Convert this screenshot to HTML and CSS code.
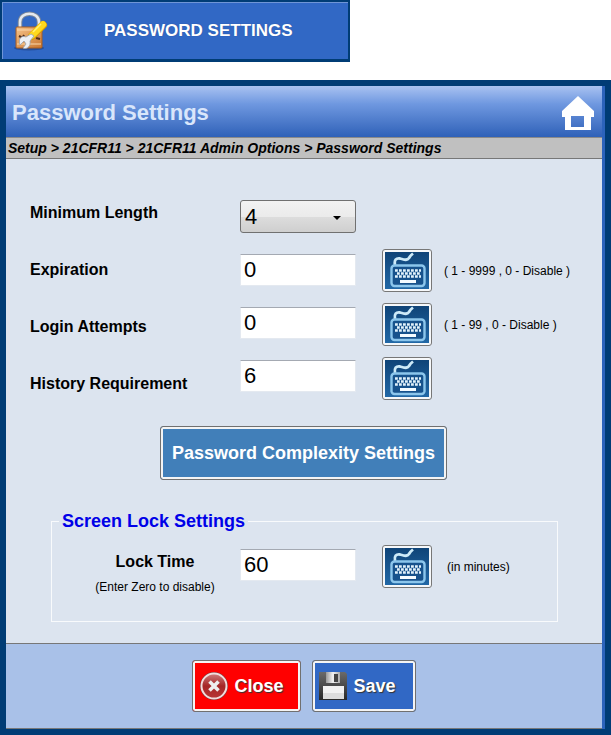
FILE: index.html
```html
<!DOCTYPE html>
<html lang="en">
<head>
<meta charset="utf-8">
<title>Password Settings</title>
<link rel="stylesheet" href="styles.css">
</head>
<body>
<svg class="defs" aria-hidden="true">
  <defs>
    <linearGradient id="key-bg" x1="0" y1="0" x2="0" y2="1">
      <stop offset="0" stop-color="#0f4478"/><stop offset="1" stop-color="#2268a6"/>
    </linearGradient>
    <symbol id="keyboard" viewBox="0 0 44 37">
      <rect width="44" height="37" fill="url(#key-bg)"/>
      <path d="M10 13C9 8 11 6 15 6.500C19 7.500 22 9 24 6C25 4 26 3 28 1.500" fill="none" stroke="#cdeaf8" stroke-width="2.800"/>
      <rect x="6.500" y="13.500" width="33" height="20.500" rx="3" fill="#17528c" stroke="#8cc6ec" stroke-width="2.400"/>
      <path d="M10 18.500H36M10 24.500H36" stroke="#e2f2fb" stroke-width="2.600" stroke-dasharray="2.800 1.200"/>
      <path d="M12 21.500H35" stroke="#e2f2fb" stroke-width="2.600" stroke-dasharray="2.800 1.200"/>
      <path d="M15 29.500H31" stroke="#f4fbff" stroke-width="3"/>
    </symbol>
  </defs>
</svg>

<button class="launcher" type="button">
  <svg class="launcher-icon" viewBox="0 0 36 40" aria-hidden="true">
    <defs>
      <linearGradient id="lock" x1="0" y1="0" x2="1" y2="1">
        <stop offset="0" stop-color="#f6c38a"/><stop offset="1" stop-color="#c9762f"/>
      </linearGradient>
    </defs>
    <ellipse cx="17" cy="37" rx="15" ry="2.500" fill="#1c3f80" opacity=".6"/>
    <path d="M8 17V11C8 0 27 0 27 11V17" fill="none" stroke="#7b8797" stroke-width="4.500"/>
    <path d="M8 17V11C8 0 27 0 27 11V17" fill="none" stroke="#e4e8ee" stroke-width="2.600"/>
    <rect x="4" y="16" width="26" height="21" rx="1" fill="url(#lock)" stroke="#a85d20"/>
    <path d="M5 19H29M5 33H29" stroke="#fbd9ad"/>
    <path d="M7 25l4 2M12 24l-2 4M24 27l4 1" stroke="#55301a" stroke-width="2"/>
    <path d="M20 25L31 14" stroke="#d99a00" stroke-width="8" stroke-linecap="round"/>
    <path d="M20 24.500L31 13.500" stroke="#ffd91f" stroke-width="6.500" stroke-linecap="round"/>
    <path d="M21 21L29 13" stroke="#fff27a" stroke-width="1.500"/>
    <path d="M22 25L18 30C19 35 15 39 11 37L14 33L12 30L8 34C6 28 9 24 14 26L19 23Z" fill="#edf0f4" stroke="#98a2ae" stroke-width=".8"/>
  </svg>
  <span class="launcher-text">PASSWORD SETTINGS</span>
</button>

<main class="dialog">
  <header class="titlebar">
    <h1>Password Settings</h1>
    <a class="home" href="#" aria-label="Home">
      <svg viewBox="0 0 32 34" aria-hidden="true"><path fill="#fff" fill-rule="evenodd" d="M16 0L32 15V21H29V34H3V21H0V15ZM9 20V31H22V20Z"/></svg>
    </a>
  </header>
  <nav class="crumbs">Setup &gt; 21CFR11 &gt; 21CFR11 Admin Options &gt; Password Settings</nav>

  <form class="form" id="settings">
    <div class="columns">
      <div class="labels">
        <label for="length">Minimum Length</label>
        <label for="expiration">Expiration</label>
        <label for="attempts">Login Attempts</label>
        <label for="history">History Requirement</label>
      </div>
      <div class="fields">
        <div class="picker">
          <select id="length"><option>4</option></select>
        </div>
        <input id="expiration" type="text" value="0">
        <input id="attempts" type="text" value="0">
        <input id="history" type="text" value="6">
      </div>
      <div class="keys">
        <div class="key-row">
          <button class="key" type="button" aria-label="Keyboard for Expiration"><svg><use href="#keyboard"/></svg></button>
          <span>( 1 - 9999 , 0 - Disable )</span>
        </div>
        <div class="key-row">
          <button class="key" type="button" aria-label="Keyboard for Login Attempts"><svg><use href="#keyboard"/></svg></button>
          <span>( 1 - 99 , 0 - Disable )</span>
        </div>
        <div class="key-row">
          <button class="key" type="button" aria-label="Keyboard for History Requirement"><svg><use href="#keyboard"/></svg></button>
        </div>
      </div>
    </div>

    <button class="btn complexity" type="button">Password Complexity Settings</button>

    <fieldset>
      <legend>Screen Lock Settings</legend>
      <div class="lock-row">
        <div class="lock-label">
          <label for="lock-time">Lock Time</label>
          <small>(Enter Zero to disable)</small>
        </div>
        <input id="lock-time" type="text" value="60">
        <div class="key-row">
          <button class="key" type="button" aria-label="Keyboard for Lock Time"><svg><use href="#keyboard"/></svg></button>
          <span>(in minutes)</span>
        </div>
      </div>
    </fieldset>
  </form>

  <footer class="actions">
    <button class="btn close" type="button">
      <svg viewBox="0 0 28 28" aria-hidden="true">
        <defs><linearGradient id="disc" x1="0" y1="0" x2="0" y2="1"><stop offset="0" stop-color="#d08080"/><stop offset=".5" stop-color="#a52626"/><stop offset="1" stop-color="#b93838"/></linearGradient></defs>
        <circle cx="14" cy="14" r="13" fill="url(#disc)" stroke="#7d3535" stroke-width="2"/>
        <circle cx="14" cy="14" r="12.500" fill="none" stroke="#f3dcdc" stroke-width="2"/>
        <path d="M9.500 9.500L18.500 18.500M18.500 9.500L9.500 18.500" stroke="#eee" stroke-width="3.600"/>
      </svg>
      Close
    </button>
    <button class="btn save" type="submit" form="settings">
      <svg viewBox="0 0 28 28" aria-hidden="true">
        <defs>
          <linearGradient id="disk" x1="0" y1="0" x2="0" y2="1"><stop offset="0" stop-color="#6a6a6a"/><stop offset="1" stop-color="#292929"/></linearGradient>
          <linearGradient id="steel" x1="0" y1="0" x2="1" y2="0"><stop offset="0" stop-color="#999"/><stop offset=".5" stop-color="#f3f3f3"/><stop offset="1" stop-color="#aaa"/></linearGradient>
        </defs>
        <path d="M0 0H26L28 2V28H0Z" fill="url(#disk)"/>
        <rect x="7" width="14" height="11" fill="url(#steel)"/>
        <rect x="15" y="2" width="4" height="8" fill="#444"/>
        <rect x="4" y="14" width="21" height="13" fill="#f2f2f2"/>
        <path d="M4 21H25V27H4Z" fill="#ddd"/>
      </svg>
      Save
    </button>
  </footer>
</main>
</body>
</html>
```
FILE: styles.css
```css
* { box-sizing: border-box; }

body {
  margin: 0;
  background: #fff;
  color: #000;
  font-family: "Liberation Sans", Arial, sans-serif;
  font-size: 16px;
}

button, input, select { font-family: inherit; margin: 0; }

.defs { position: absolute; width: 0; height: 0; }

.launcher {
  display: flex;
  align-items: center;
  width: 350px;
  height: 62px;
  padding: 0 10px;
  border: 2px solid #003c75;
  border-bottom-width: 3px;
  background: #3168c5;
  box-shadow: inset 1px 1px 0 #6f95d6;
  color: #fff;
  font-size: 17px;
  font-weight: bold;
}
.launcher-icon { width: 36px; height: 40px; }
.launcher-text { margin-left: 56px; text-shadow: 0 0 1px #23488c; }

.dialog {
  margin-top: 18px;
  border: 6px solid #003c75;
  padding-right: 3px;
  background: #2c63bb;
}

.titlebar {
  display: flex;
  align-items: center;
  justify-content: space-between;
  height: 51px;
  padding: 2px 8px 0 6px;
  background: linear-gradient(#a9c2f1, #6f98e0 35%, #2f61b8);
}
h1 { margin: 0; font-size: 22px; color: #d9e6fb; }
.home { width: 32px; height: 34px; }
.home svg { display: block; width: 100%; height: 100%; }

.crumbs {
  height: 22px;
  padding-left: 2px;
  border-top: 1px solid #8a8a8a;
  border-bottom: 1px solid #777;
  background: #c0c0c0;
  font-size: 14px;
  font-weight: bold;
  font-style: italic;
  line-height: 20px;
}

.form {
  padding: 41px 44px 21px 24px;
  background: #dce4ef;
}
.columns { display: flex; margin-right: -44px; }
.labels {
  display: flex;
  flex-direction: column;
  gap: 37px;
  width: 210px;
  padding-top: 3px;
  font-weight: bold;
  line-height: 20px;
}
.fields {
  display: flex;
  flex-direction: column;
  gap: 21px;
  width: 116px;
}

input, select {
  width: 116px;
  height: 32px;
  border: 1px solid #e4e9f0;
  border-top-color: #a4a9b2;
  padding: 0 3px;
  background: #fff;
  color: #000;
  font-size: 22px;
}

.picker { position: relative; height: 33px; }
.picker::after {
  content: "";
  position: absolute;
  right: 15px;
  top: 16px;
  border: 4px solid transparent;
  border-top-color: #000;
  border-bottom: 0;
  pointer-events: none;
}
select {
  display: block;
  height: 33px;
  border: 1px solid #707070;
  border-radius: 3px;
  padding: 0 4px;
  background: linear-gradient(#f2f2f2, #ebebeb 50%, #dddddd 50%, #cfcfcf);
  appearance: none;
}

.keys {
  display: flex;
  flex-direction: column;
  gap: 11px;
  padding: 49px 0 0 26px;
}
.key-row {
  display: flex;
  align-items: center;
  gap: 12px;
  font-size: 12px;
  white-space: nowrap;
}
.key {
  width: 50px;
  height: 43px;
  padding: 2px;
  border: 1px solid #777;
  border-radius: 3px;
  background: #f6f8fa;
}
.key svg { display: block; width: 44px; height: 37px; }

.btn {
  display: flex;
  align-items: center;
  border: 1px solid #707070;
  border-radius: 3px;
  box-shadow: inset 0 0 0 2px #f4f4f4;
  color: #fff;
  font-size: 18px;
  font-weight: bold;
}
.complexity {
  height: 54px;
  margin: 26px auto 30px 130px;
  padding: 0 11px;
  background: #417fb9;
}

fieldset {
  min-width: 0;
  margin: 0 0 0 21px;
  border: 1px solid #f8fafc;
  padding: 13px 0 33px;
}
legend {
  margin-left: 7px;
  padding: 0 3px;
  color: #0000e8;
  font-size: 18px;
  font-weight: bold;
  line-height: 22px;
}
.lock-row { display: flex; }
.lock-row > input { margin-top: 4px; }
.lock-row > .key-row { margin-left: 26px; gap: 15px; }
.lock-label {
  display: flex;
  flex-direction: column;
  align-items: center;
  gap: 7px;
  width: 188px;
  height: 43px;
  padding: 7px 0 0 18px;
  font-weight: bold;
  line-height: 20px;
}
.lock-label small { font-size: 12px; font-weight: normal; line-height: 16px; }

.actions {
  display: flex;
  justify-content: center;
  gap: 11px;
  padding: 16px 0;
  border-top: 1px solid #777;
  border-bottom: 1px solid #777;
  background: #a9c1e8;
}
.actions .btn { height: 52px; gap: 6px; text-shadow: 1px 1px 1px #333; }
.actions svg { width: 28px; height: 28px; }
.close { padding: 0 17px 0 7px; background: #f00; }
.save { padding: 0 19px 0 6px; background: #3168c5; }
```
